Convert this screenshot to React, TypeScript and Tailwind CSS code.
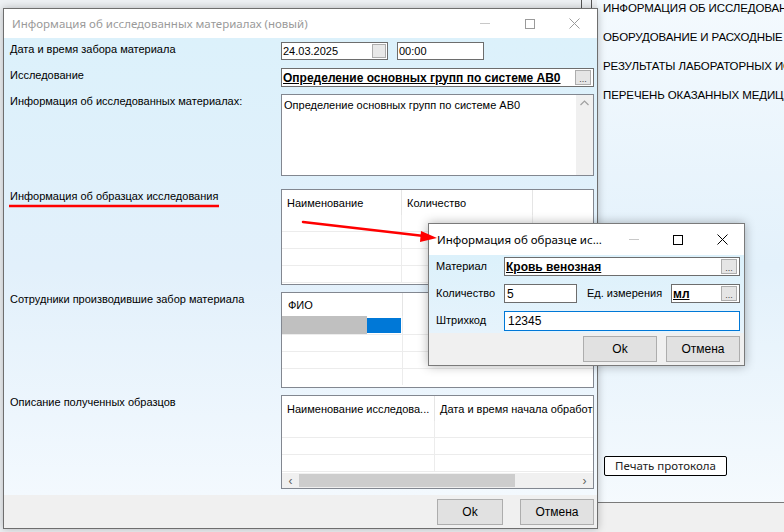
import React from 'react';

const sans = "font-['Liberation_Sans',Arial,sans-serif]";
const ui = "font-['Noto_Sans','Open_Sans',sans-serif]";

function DotsButton() {
  return (
    <div className="w-[16px] h-[15px] shrink-0 border border-[#adadad] bg-[#e5e5e5] flex items-end justify-center text-[9px] leading-[10px] text-[#444]">
      ...
    </div>
  );
}

function WinButton({ label, w }: { label: string; w: string }) {
  return (
    <div className={`${w} h-[26px] border border-[#adadad] bg-[#e1e1e1] flex items-center justify-center text-[12px] text-black`}>
      {label}
    </div>
  );
}

function TitleControls({ color, wide }: { color: string; wide: string }) {
  return (
    <div className="flex h-full">
      <div className={`${wide} flex items-center justify-center`}>
        <div className="w-[10px] h-px" style={{ background: '#c8c8c8' }} />
      </div>
      <div className={`${wide} flex items-center justify-center`}>
        <div className="w-[10px] h-[10px] border" style={{ borderColor: color }} />
      </div>
      <div className={`${wide} flex items-center justify-center`}>
        <svg width="11" height="11" viewBox="0 0 11 11">
          <path d="M0.5 0.5 L10.5 10.5 M10.5 0.5 L0.5 10.5" stroke={color} strokeWidth="1" />
        </svg>
      </div>
    </div>
  );
}

function Grid({
  cols,
  rows,
  h,
  scroll,
}: {
  cols: { title: string; w: string }[];
  rows: number;
  h: string;
  scroll?: boolean;
}) {
  return (
    <div className={`${h} border border-[#828790] bg-white flex flex-col overflow-hidden`}>
      <div className="flex h-[25px] shrink-0">
        {cols.map((c) => (
          <div key={c.title} className={`${c.w} shrink-0 border-r border-[#e5e5e5] pl-[5px] flex items-center whitespace-nowrap overflow-hidden text-[11px]`}>
            {c.title}
          </div>
        ))}
      </div>
      <div className="flex-1 flex flex-col">
        {Array.from({ length: rows }).map((_, i) => (
          <div key={i} className="h-[17px] border-b border-[#ececec] flex shrink-0">
            {cols.map((c) => (
              <div key={c.title} className={`${c.w} shrink-0 border-r border-[#ececec]`} />
            ))}
          </div>
        ))}
      </div>
      {scroll && (
        <div className="h-[15px] shrink-0 bg-[#f0f0f0] flex items-center">
          <div className="w-[17px] flex justify-center text-[12px] leading-[12px] text-[#606060]">‹</div>
          <div className="w-[216px] h-[13px] bg-[#cdcdcd]" />
          <div className="flex-1" />
          <div className="w-[17px] flex justify-center text-[12px] leading-[12px] text-[#606060]">›</div>
        </div>
      )}
    </div>
  );
}

export default function App() {
  const label = 'w-[271px] shrink-0 whitespace-nowrap';
  return (
    <div className={`relative w-[784px] h-[532px] overflow-hidden bg-[#eef1f4] text-black ${sans}`}>
      {/* background application: right panel */}
      <div className="absolute left-[597px] top-0 w-[187px] h-full flex flex-col bg-gradient-to-b from-[#f4fafe] via-[#e3f1fb] to-[#f7fbfe]">
        <div className="flex flex-col gap-[13px] pl-[6px] text-[11.5px] leading-[16px] whitespace-nowrap overflow-hidden tracking-[-0.1px]">
          <div>ИНФОРМАЦИЯ ОБ ИССЛЕДОВАННЫХ</div>
          <div>ОБОРУДОВАНИЕ И РАСХОДНЫЕ МАТЕРИАЛЫ</div>
          <div>РЕЗУЛЬТАТЫ ЛАБОРАТОРНЫХ ИССЛЕДОВАНИЙ</div>
          <div>ПЕРЕЧЕНЬ ОКАЗАННЫХ МЕДИЦИНСКИХ УСЛУГ</div>
        </div>
        <div className="flex-1" />
        <div className="pl-[7px] pb-[26px]">
          <div className={`w-[123px] h-[20px] border border-black rounded-[2px] bg-white flex items-center justify-center text-[11.5px] text-[#222] ${ui}`}>
            Печать протокола
          </div>
        </div>
        <div className="h-[30px] border-t border-[#7a7a7a] bg-[#f0f0f0]" />
      </div>

      {/* background separators at top */}
      <div className="absolute left-[581px] top-0 w-px h-[10px] bg-[#555]" />
      <div className="absolute left-[591px] top-0 w-px h-[10px] bg-[#555]" />

      {/* main window */}
      <div className="absolute left-[3px] top-[8px] w-[595px] h-[521px] border border-[#6e6e6e] bg-white flex flex-col shadow-[0_0_8px_rgba(0,0,0,0.25)]">
        <div className="h-[29px] shrink-0 flex items-center bg-white">
          <div className={`flex-1 pl-[8px] text-[11.5px] text-[#9a9a9a] ${ui}`}>
            Информация об исследованных материалах (новый)
          </div>
          <TitleControls color="#9a9a9a" wide="w-[45px]" />
        </div>

        <div className="flex-1 flex flex-col pt-[4px] pl-[6px] pr-[3px] bg-gradient-to-b from-[#dcf1fb] via-[#e2f0fb] to-[#f3f9fe] text-[11px] leading-[14px]">
          {/* row 1 */}
          <div className="flex h-[18px]">
            <div className={label}>Дата и время забора материала</div>
            <div className="flex gap-[9px]">
              <div className="w-[107px] h-[18px] border border-[#6d6d6d] bg-white flex items-center pl-[1px] pr-[1px] justify-between">
                <span>24.03.2025</span>
                <div className="w-[14px] h-[14px] border border-[#adadad] bg-[#e8e8e8]" />
              </div>
              <div className="w-[87px] h-[18px] border border-[#6d6d6d] bg-white flex items-center pl-[1px]">00:00</div>
            </div>
          </div>
          {/* row 2 */}
          <div className="flex h-[18px] mt-[8px]">
            <div className={label}>Исследование</div>
            <div className="flex-1 min-w-0 h-[19px] border border-[#6d6d6d] bg-white flex items-center pl-[1px] pr-[2px] justify-between text-[12px]">
              <span className="font-bold underline whitespace-nowrap">Определение основных групп по системе АВ0</span>
              <DotsButton />
            </div>
          </div>
          {/* row 3 */}
          <div className="flex h-[82px] mt-[8px]">
            <div className={label}>Информация об исследованных материалах:</div>
            <div className="flex-1 min-w-0 border border-[#828790] bg-white flex">
              <div className="flex-1 pl-[2px] pt-[3px]">Определение основных групп по системе АВ0</div>
              <div className="w-[17px] bg-[#f0f0f0] flex justify-center pt-[5px]">
                <svg width="9" height="6" viewBox="0 0 9 6">
                  <path d="M0.5 5 L4.5 1 L8.5 5" stroke="#a0a0a0" strokeWidth="1.2" fill="none" />
                </svg>
              </div>
            </div>
          </div>
          {/* row 4 */}
          <div className="flex mt-[13px]">
            <div className={label}>Информация об образцах исследования</div>
            <div className="flex-1 min-w-0">
              <Grid
                h="h-[96px]"
                rows={4}
                cols={[
                  { title: 'Наименование', w: 'w-[120px]' },
                  { title: 'Количество', w: 'w-[131px]' },
                  { title: '', w: 'w-[62px]' },
                ]}
              />
            </div>
          </div>
          {/* row 5 */}
          <div className="flex mt-[7px]">
            <div className={label}>Сотрудники производившие забор материала</div>
            <div className="flex-1 min-w-0">
              <div className="h-[96px] border border-[#828790] bg-white flex flex-col overflow-hidden">
                <div className="flex h-[23px] shrink-0">
                  <div className="w-[121px] border-r border-[#e5e5e5] pl-[6px] flex items-center">ФИО</div>
                </div>
                <div className="flex h-[18px] items-center shrink-0">
                  <div className="w-[85px] h-[19px] bg-[#c0c0c0]" />
                  <div className="w-[34px] h-[15px] bg-[#0078d7]" />
                  <div className="w-[2px] h-full border-r border-[#ececec]" />
                </div>
                {[0, 1, 2].map((i) => (
                  <div key={i} className="h-[17px] border-t border-[#ececec] flex shrink-0">
                    <div className="w-[121px] border-r border-[#ececec]" />
                  </div>
                ))}
              </div>
            </div>
          </div>
          {/* row 6 */}
          <div className="flex mt-[7px]">
            <div className={label}>Описание полученных образцов</div>
            <div className="flex-1 min-w-0">
              <Grid
                h="h-[94px]"
                rows={3}
                scroll
                cols={[
                  { title: 'Наименование исследова...', w: 'w-[153px]' },
                  { title: 'Дата и время начала обработки', w: 'w-[170px]' },
                ]}
              />
            </div>
          </div>
        </div>

        <div className="h-[33px] shrink-0 bg-[#f0f0f0] flex items-center justify-end gap-[17px] pr-[3px]">
          <WinButton label="Ok" w="w-[66px]" />
          <WinButton label="Отмена" w="w-[74px]" />
        </div>
      </div>

      {/* dialog */}
      <div className="absolute left-[428px] top-[223px] w-[317px] h-[143px] border border-[#7a7a7a] bg-white flex flex-col shadow-[0_0_10px_rgba(0,0,0,0.3)]">
        <div className="h-[31px] shrink-0 flex items-center">
          <div className={`flex-1 pl-[8px] text-[11.5px] text-black ${ui}`}>Информация об образце ис...</div>
          <TitleControls color="#000" wide="w-[44px]" />
        </div>
        <div className="flex-1 flex flex-col gap-[8px] pt-[2px] pl-[7px] pr-[4px] bg-gradient-to-b from-[#dcf1fb] to-[#e6f3fc] text-[12px]">
          <div className="flex items-center h-[19px]">
            <div className="w-[68px] text-[11px]">Материал</div>
            <div className="flex-1 h-[19px] border border-[#6d6d6d] bg-white flex items-center justify-between pl-[1px] pr-[2px]">
              <span className="font-bold underline">Кровь венозная</span>
              <DotsButton />
            </div>
          </div>
          <div className="flex items-center h-[19px]">
            <div className="w-[68px] text-[11px]">Количество</div>
            <div className="w-[73px] h-[19px] border border-[#6d6d6d] bg-white flex items-center pl-[2px]">5</div>
            <div className="w-[94px] pl-[10px] text-[11px]">Ед. измерения</div>
            <div className="flex-1 h-[19px] border border-[#6d6d6d] bg-white flex items-center justify-between pl-[1px] pr-[2px]">
              <span className="font-bold underline">мл</span>
              <DotsButton />
            </div>
          </div>
          <div className="flex items-center h-[19px]">
            <div className="w-[68px] text-[11px]">Штрихкод</div>
            <div className="flex-1 h-[20px] border border-[#0078d7] bg-white flex items-center pl-[3px]">12345</div>
          </div>
        </div>
        <div className="h-[32px] shrink-0 bg-[#f0f0f0] flex items-center justify-end gap-[9px] pr-[4px]">
          <WinButton label="Ok" w="w-[74px]" />
          <WinButton label="Отмена" w="w-[74px]" />
        </div>
      </div>

      {/* red annotations */}
      <svg className="absolute left-0 top-0 pointer-events-none" width="784" height="532" viewBox="0 0 784 532">
        <line x1="9" y1="206" x2="219" y2="206" stroke="#ff0000" strokeWidth="2.5" />
        <line x1="303" y1="222" x2="424" y2="236" stroke="#ff0000" strokeWidth="2.5" strokeLinecap="round" />
        <polygon points="437,238 421,231 420,242" fill="#ff0000" />
      </svg>
    </div>
  );
}
